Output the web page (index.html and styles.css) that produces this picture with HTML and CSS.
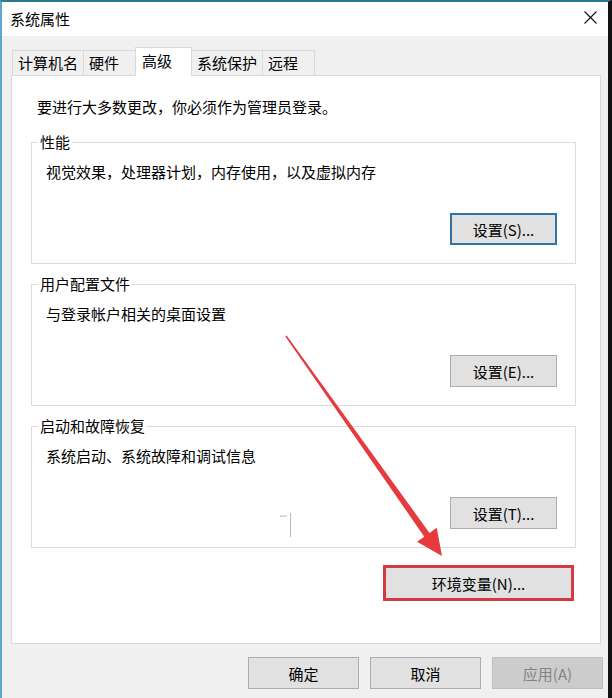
FILE: index.html
```html
<!DOCTYPE html>
<html lang="zh-CN">
<head>
  <meta charset="UTF-8">
  <title>系统属性</title>
  <link rel="stylesheet" href="styles.css">
</head>
<body>

  <div class="window">
    <!-- TITLE BAR -->
    <div class="titlebar">
      <span class="title">系统属性</span>
      <svg class="close" width="13" height="13" viewBox="0 0 13 13">
        <path d="M0.5 0.5 L12.5 12.5 M12.5 0.5 L0.5 12.5" stroke="#111" stroke-width="1.1" fill="none"/>
      </svg>
    </div>

    <div class="client">
      <!-- TABS -->
      <div class="tabs">
        <div class="tab">计算机名</div>
        <div class="tab">硬件</div>
        <div class="tab active">高级</div>
        <div class="tab">系统保护</div>
        <div class="tab">远程</div>
      </div>

      <!-- TAB PANEL -->
      <div class="panel">
        <p class="note">要进行大多数更改，你必须作为管理员登录。</p>

        <fieldset class="group">
          <legend>性能</legend>
          <p class="desc">视觉效果，处理器计划，内存使用，以及虚拟内存</p>
          <div class="actions"><button class="btn default">设置(S)...</button></div>
        </fieldset>

        <fieldset class="group">
          <legend>用户配置文件</legend>
          <p class="desc">与登录帐户相关的桌面设置</p>
          <div class="actions"><button class="btn">设置(E)...</button></div>
        </fieldset>

        <fieldset class="group">
          <legend>启动和故障恢复</legend>
          <p class="desc">系统启动、系统故障和调试信息</p>
          <div class="actions"><button class="btn">设置(T)...</button></div>
        </fieldset>

        <div class="env-row">
          <span class="highlight"><button class="btn env">环境变量(N)...</button></span>
        </div>
      </div>

      <!-- DIALOG BUTTONS -->
      <div class="footer">
        <button class="btn wide">确定</button>
        <button class="btn wide">取消</button>
        <button class="btn wide" disabled>应用(A)</button>
      </div>
    </div>

    <!-- red arrow annotation -->
    <svg class="annot" width="612" height="698" viewBox="0 0 612 698">
      <polygon fill="#e63a3e" points="285.35,336.46 286.65,335.54 429.5,532.9 436.7,527.8 442,556 417.1,541.8 424.3,536.7"/>
      <path d="M280 516.5 L287 515.8 M290.5 513 L290.5 537" stroke="#b8b8b8" stroke-width="1" fill="none"/>
    </svg>
  </div>

</body>
</html>
```

FILE: styles.css
```css
/* ---------- BASE ---------- */
* {
  box-sizing: border-box;
}
body {
  margin: 0;
  width: 612px;
  height: 698px;
  overflow: hidden;
  font-family: "Noto Sans CJK SC", "Microsoft YaHei", sans-serif;
  font-size: 15px;
  color: #000;
  background: #f0f0f0;
}
p {
  margin: 0;
}

/* ---------- WINDOW ---------- */
.window {
  position: relative;
  height: 698px;
  display: flex;
  flex-direction: column;
  background: #f0f0f0;
  border-top: 2px solid #2b7b8c;
  border-left: 2px solid #5ea6d2;
  border-right: 4px solid #111;
}
.titlebar {
  height: 34px;
  flex: none;
  background: #fff;
  display: flex;
  align-items: center;
  justify-content: space-between;
  padding: 0 11px 0 8px;
}
.title {
  line-height: 20px;
}
.close {
  display: block;
  margin-top: -3px;
}

/* ---------- CLIENT AREA ---------- */
.client {
  flex: 1;
  padding: 11px 7px 0 9px;
}

/* tabs */
.tabs {
  height: 28px;
  display: flex;
  align-items: flex-end;
  padding-left: 1px;
}
.tab {
  position: relative;
  height: 25px;
  min-width: 53px;
  padding: 0 5px;
  line-height: 24px;
  border: 1px solid #d9d9d9;
  border-bottom: none;
  margin-right: -1px;
  background: #f0f0f0;
}
.tab.active {
  height: 29px;
  min-width: 57px;
  padding: 1px 6px 0;
  line-height: 24px;
  margin-bottom: -1px;
  background: #fff;
  z-index: 1;
}

/* panel */
.panel {
  height: 569px;
  background: #fff;
  border: 1px solid #d9d9d9;
  padding: 21px 24px 0 19px;
}
.note {
  line-height: 20px;
  padding-left: 6px;
}

/* group boxes */
.group {
  margin: 10px 0 0;
  min-inline-size: 0;
  border: 1px solid #dcdcdc;
  padding: 0 18px 18px 14px;
}
.note + .group {
  margin-top: 15px;
}
.group legend {
  padding: 0 2px;
  margin-left: -8px;
  line-height: 20px;
}
.desc {
  margin-top: 10px;
  line-height: 20px;
}
.actions {
  display: flex;
  justify-content: flex-end;
  margin-top: 31px;
}

/* buttons */
.btn {
  width: 107px;
  height: 32px;
  padding: 0;
  font-family: inherit;
  font-size: 15px;
  color: #000;
  background: #e1e1e1;
  border: 1px solid #adadad;
}
.btn.default {
  border: 2px solid #2f74a6;
}
.btn.wide {
  width: 111px;
}
.btn:disabled {
  background: #cccccc;
  border-color: #bfbfbf;
  color: #838383;
}

.env-row {
  display: flex;
  justify-content: flex-end;
  margin: 17px 2px 0 0;
}
.highlight {
  display: block;
  border: 3px solid #d6393f;
}
.btn.env {
  display: block;
  width: 185px;
  height: 30px;
  border: none;
}

/* bottom row */
.footer {
  display: flex;
  justify-content: flex-end;
  gap: 11px;
  padding-top: 13px;
  margin-right: -2px;
}

/* ---------- ANNOTATION ---------- */
.annot {
  position: absolute;
  top: -2px;
  left: -2px;
  pointer-events: none;
}
```
